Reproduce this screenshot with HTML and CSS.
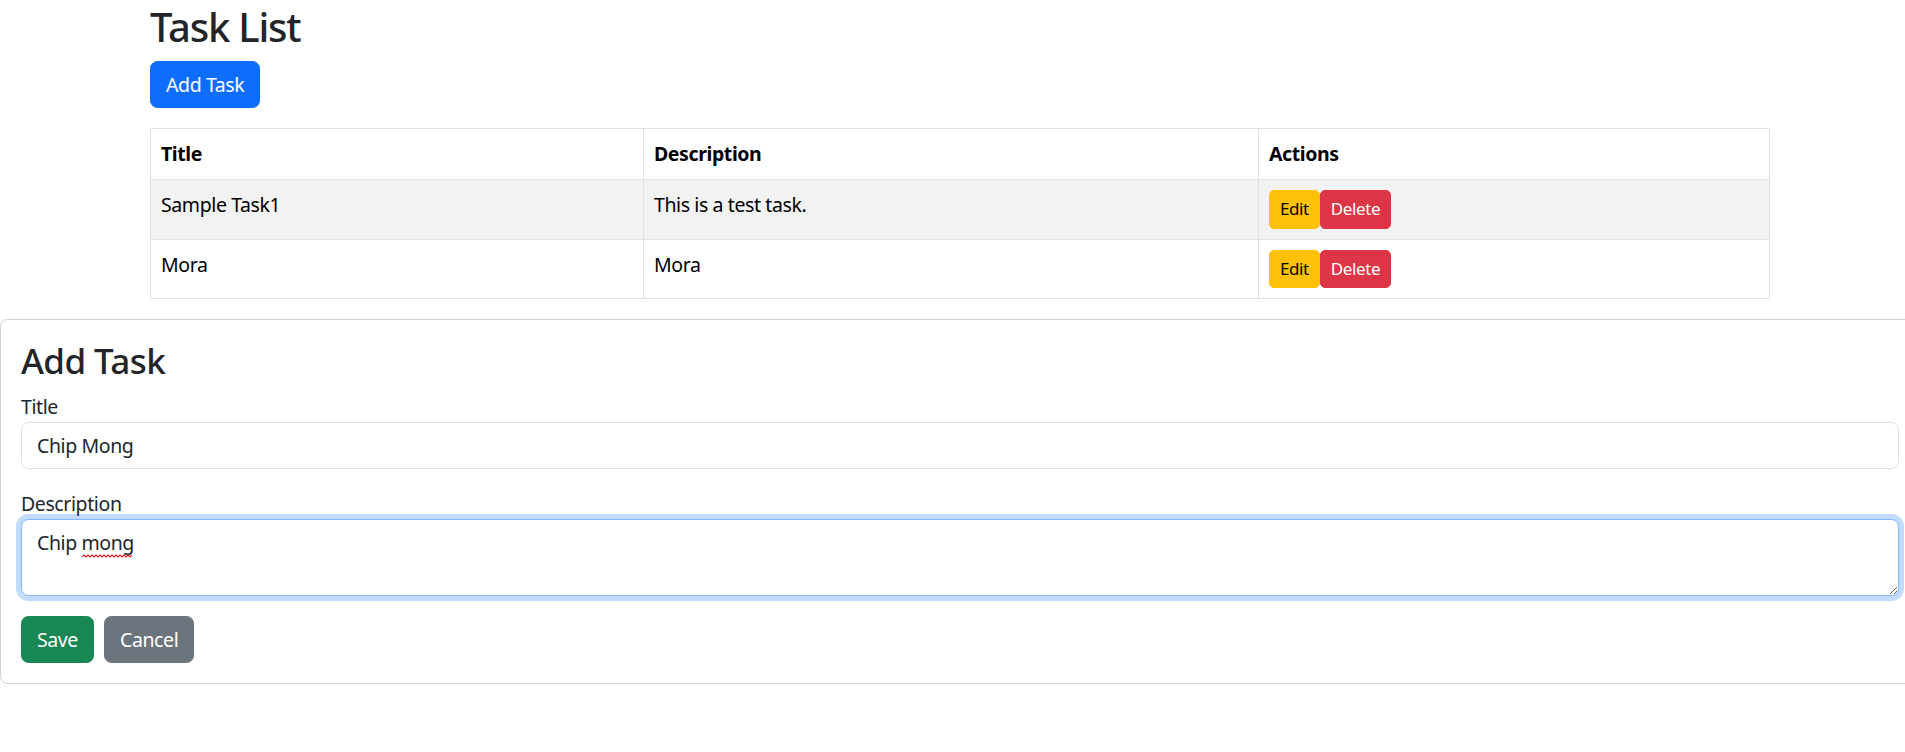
FILE: index.html
```html
<!DOCTYPE html>
<html lang="en">
<head>
<meta charset="utf-8">
<title>Task List</title>
<link rel="stylesheet" href="styles.css">
</head>
<body>
<div class="container">
  <h1 class="page-title">Task List</h1>
  <div class="toolbar"><button class="btn btn-primary">Add Task</button></div>
  <table class="table">
    <thead>
      <tr><th class="col-title">Title</th><th class="col-desc">Description</th><th>Actions</th></tr>
    </thead>
    <tbody>
      <tr class="striped">
        <td>Sample Task1</td>
        <td>This is a test task.</td>
        <td><div class="row-actions"><button class="btn btn-sm btn-warning">Edit</button><button class="btn btn-sm btn-danger">Delete</button></div></td>
      </tr>
      <tr>
        <td>Mora</td>
        <td>Mora</td>
        <td><div class="row-actions"><button class="btn btn-sm btn-warning">Edit</button><button class="btn btn-sm btn-danger">Delete</button></div></td>
      </tr>
    </tbody>
  </table>
</div>
<div class="card">
  <h3 class="card-title">Add Task</h3>
  <div class="field">
    <label class="form-label" for="title">Title</label>
    <input id="title" class="form-control" type="text" value="Chip Mong">
  </div>
  <div class="field">
    <label class="form-label" for="desc">Description</label>
    <div class="textarea-wrap">
      <textarea id="desc" class="form-control is-focused" rows="2" spellcheck="false">Chip mong</textarea>
      <svg class="spell" width="50" height="4" viewBox="0 0 50 4"><polyline points="0,3 2,1 4,3 6,1 8,3 10,1 12,3 14,1 16,3 18,1 20,3 22,1 24,3 26,1 28,3 30,1 32,3 34,1 36,3 38,1 40,3 42,1 44,3 46,1 48,3 50,1" fill="none" stroke="#e02020" stroke-width="1.2"/></svg>
    </div>
  </div>
  <div class="form-actions">
    <button class="btn btn-success">Save</button>
    <button class="btn btn-secondary">Cancel</button>
  </div>
</div>
</body>
</html>
```

FILE: styles.css
```css
html {
  overflow: hidden;
}

body {
  margin: 0;
  width: 1920px;
  font-family: "Noto Sans", "Open Sans", sans-serif;
  font-size: 19.5px;
  line-height: 30px;
  letter-spacing: -0.4px;
  color: #212529;
  background: #fff;
}

*, *::before, *::after {
  box-sizing: border-box;
}

.container {
  width: 1620px;
  margin: 0 auto;
  padding-top: 3px;
}

.page-title {
  margin: 0 0 10px;
  font-size: 40px;
  line-height: 48px;
  font-weight: 500;
  letter-spacing: -1.2px;
}

.toolbar {
  display: flex;
}

.btn {
  font-family: inherit;
  font-size: 19.5px;
  line-height: 30px;
  letter-spacing: inherit;
  padding: 7.5px 15px;
  border: 1px solid transparent;
  border-radius: 7.5px;
  color: #fff;
  cursor: pointer;
}

.btn-primary { background: #0d6efd; border-color: #0d6efd; }
.btn-success { background: #198754; border-color: #198754; }
.btn-secondary { background: #6c757d; border-color: #6c757d; }
.btn-warning { background: #ffc107; border-color: #ffc107; color: #000; }
.btn-danger { background: #dc3545; border-color: #dc3545; }

.btn-sm {
  font-size: 17px;
  line-height: 26.5px;
  padding: 5px 10px;
  border-radius: 5px;
}

.table {
  width: 1620px;
  margin: 20px 0;
  border-collapse: collapse;
  color: #000;
}

.table th,
.table td {
  padding: 10px;
  border: 1px solid #dee2e6;
  text-align: left;
  vertical-align: top;
  line-height: 30px;
}

.table th {
  font-weight: 700;
}

.col-title { width: 493px; }
.col-desc { width: 615px; }

.striped td {
  background: #f2f2f2;
}

.row-actions {
  display: flex;
}

.card {
  width: 1920px;
  border: 1px solid rgba(0, 0, 0, 0.175);
  border-radius: 7.5px;
  padding: 20px;
}

.card-title {
  margin: 0 0 10px;
  font-size: 35px;
  line-height: 42px;
  font-weight: 500;
  letter-spacing: -0.6px;
}

.field {
  margin-bottom: 20px;
}

.form-label {
  display: block;
}

.form-control {
  display: block;
  width: 100%;
  font-family: inherit;
  font-size: 19.5px;
  line-height: 30px;
  letter-spacing: inherit;
  padding: 7.5px 15px;
  color: #212529;
  background: #fff;
  border: 1px solid #dee2e6;
  border-radius: 7.5px;
  margin: 0;
}

textarea.form-control {
  resize: vertical;
}

.form-control.is-focused {
  border-color: #86b7fe;
  box-shadow: 0 0 0 5px rgba(13, 110, 253, 0.25);
  outline: none;
}

.textarea-wrap {
  position: relative;
}

.spell {
  position: absolute;
  left: 61px;
  top: 35px;
}

.form-actions {
  display: flex;
  gap: 10px;
}
```
